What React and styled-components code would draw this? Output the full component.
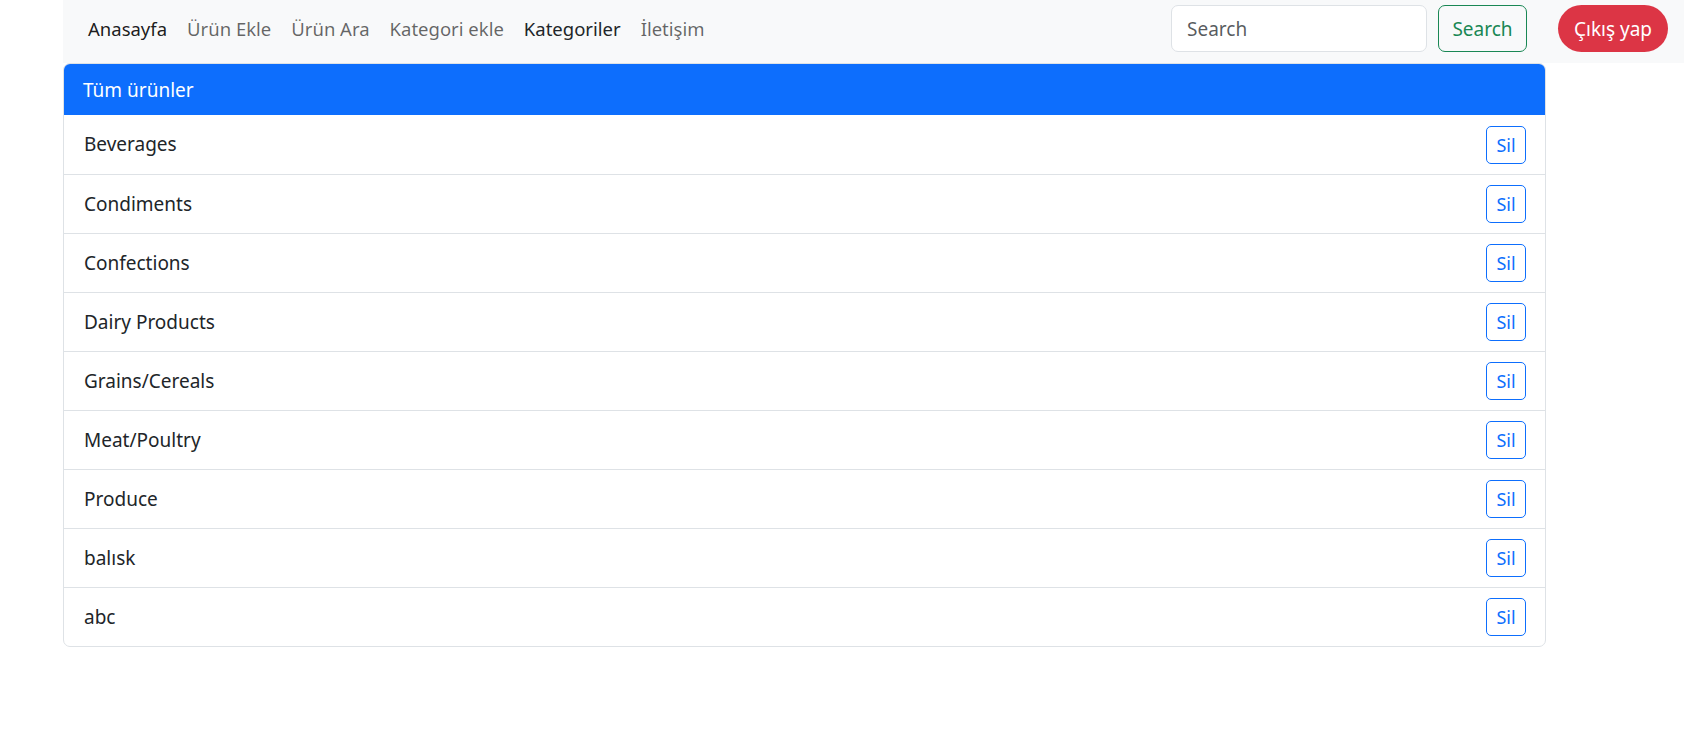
import React from "react";
import styled, { createGlobalStyle } from "styled-components";

const categories = [
  "Beverages",
  "Condiments",
  "Confections",
  "Dairy Products",
  "Grains/Cereals",
  "Meat/Poultry",
  "Produce",
  "balısk",
  "abc",
];

const links = [
  { label: "Anasayfa", tone: "active" },
  { label: "Ürün Ekle", tone: "muted" },
  { label: "Ürün Ara", tone: "muted" },
  { label: "Kategori ekle", tone: "muted" },
  { label: "Kategoriler", tone: "dark" },
  { label: "İletişim", tone: "muted" },
];

const toneColor = {
  active: "rgba(0, 0, 0, 0.9)",
  muted: "rgba(0, 0, 0, 0.6)",
  dark: "#212529",
};

function App() {
  return (
    <>
      <GlobalStyle />
      <Page>
        <Navbar>
          <NavList>
            {links.map((l) => (
              <NavLink key={l.label} tone={l.tone} href="#">
                {l.label}
              </NavLink>
            ))}
          </NavList>
          <SearchForm onSubmit={(e) => e.preventDefault()}>
            <SearchInput type="search" placeholder="Search" />
            <OutlineButton type="submit">Search</OutlineButton>
          </SearchForm>
          <LogoutButton>Çıkış yap</LogoutButton>
        </Navbar>

        <Card>
          <CardHeader>Tüm ürünler</CardHeader>
          <List>
            {categories.map((c) => (
              <Row key={c}>
                <span>{c}</span>
                <DeleteButton>Sil</DeleteButton>
              </Row>
            ))}
          </List>
        </Card>
      </Page>
    </>
  );
}

const GlobalStyle = createGlobalStyle`
  * {
    box-sizing: border-box;
  }
  body {
    margin: 0;
    background: #fff;
    color: #212529;
    font-family: "Noto Sans", "Open Sans", sans-serif;
    font-size: 20px;
    line-height: 1.5;
  }
`;

const Page = styled.div`
  padding-left: 63px;
`;

const Navbar = styled.nav`
  display: flex;
  align-items: flex-start;
  height: 63px;
  padding: 5px 16px 0 15px;
  background: #f8f9fa;
`;

const NavList = styled.div`
  display: flex;
  align-items: center;
  flex: 1;
  height: 47px;
`;

const NavLink = styled.a`
  padding: 0 10px;
  color: ${(p) => toneColor[p.tone]};
  text-decoration: none;
  font-size: 18.5px;
`;

const SearchForm = styled.form`
  display: flex;
  gap: 11px;
  margin-right: 31px;
`;

const SearchInput = styled.input`
  width: 256px;
  height: 47px;
  padding: 0 15px;
  border: 1px solid #dee2e6;
  border-radius: 7px;
  background: #fff;
  font-family: inherit;
  font-size: 19px;
  color: #212529;
  outline: none;
  &::placeholder {
    color: rgba(33, 37, 41, 0.75);
  }
`;

const OutlineButton = styled.button`
  width: 89px;
  height: 47px;
  border: 1px solid #198754;
  border-radius: 7px;
  background: transparent;
  color: #198754;
  font-family: inherit;
  font-size: 19px;
  cursor: pointer;
`;

const LogoutButton = styled.button`
  width: 110px;
  height: 47px;
  border: none;
  border-radius: 24px;
  background: #dc3545;
  color: #fff;
  font-family: inherit;
  font-size: 19px;
  cursor: pointer;
`;

const Card = styled.div`
  width: 1483px;
  border: 1px solid #dee2e6;
  border-radius: 7px;
  overflow: hidden;
`;

const CardHeader = styled.div`
  height: 52px;
  display: flex;
  align-items: center;
  padding: 2px 20px 0;
  margin: -1px -1px 0;
  background: #0d6efd;
  color: #fff;
  font-size: 19px;
`;

const List = styled.div`
  display: flex;
  flex-direction: column;
`;

const Row = styled.div`
  height: 59px;
  display: flex;
  align-items: center;
  justify-content: space-between;
  padding: 0 19px 0 20px;
  font-size: 19px;
  & + & {
    border-top: 1px solid #dee2e6;
  }
`;

const DeleteButton = styled.button`
  width: 40px;
  height: 38px;
  padding: 0;
  border: 1px solid #0d6efd;
  border-radius: 5px;
  background: transparent;
  color: #0d6efd;
  font-family: inherit;
  font-size: 18px;
  cursor: pointer;
`;

export default App;
